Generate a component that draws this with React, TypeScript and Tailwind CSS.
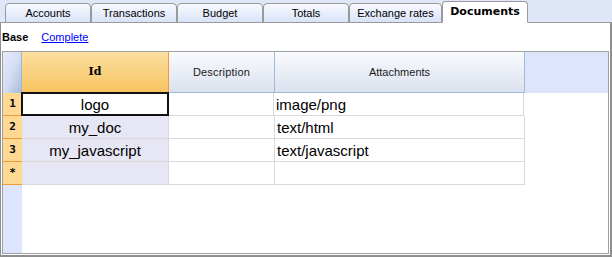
import React from "react";

const tabs = [
  { label: "Accounts", w: 86 },
  { label: "Transactions", w: 86 },
  { label: "Budget", w: 86 },
  { label: "Totals", w: 86 },
  { label: "Exchange rates", w: 93 },
];

const rows = [
  { n: "1", id: "logo", att: "image/png", sel: true },
  { n: "2", id: "my_doc", att: "text/html" },
  { n: "3", id: "my_javascript", att: "text/javascript" },
  { n: "*", id: "", att: "" },
];

export default function App() {
  return (
    <div
      className="w-[612px] h-[257px] bg-[#dfe6f8] flex flex-col overflow-hidden"
      style={{ fontFamily: "'Liberation Sans', Arial, sans-serif" }}
    >
      {/* Tab bar */}
      <div className="h-[23px] flex items-end pl-[5px] border-b border-[#9a9a9a] relative">
        {tabs.map((t) => (
          <div
            key={t.label}
            style={{ width: t.w }}
            className="h-[20px] -mb-px border border-[#9a9a9a] rounded-t-[4px] bg-gradient-to-b from-[#f8faff] to-[#d9e2f8] flex items-center justify-center text-[11px] text-black leading-none pt-[1px]"
          >
            {t.label}
          </div>
        ))}
        <div
          className="w-[86px] h-[22px] -mb-px border border-[#9a9a9a] border-b-white rounded-t-[4px] bg-white flex items-start pt-[4px] justify-center text-[11px] font-bold text-black leading-none"
          style={{ fontFamily: "'DejaVu Sans', sans-serif" }}
        >
          Documents
        </div>
      </div>

      {/* Content panel */}
      <div className="flex-1 bg-white border-l border-r-2 border-b-2 border-[#8e8e8e] flex flex-col">
        <div className="h-[28px] flex items-center pl-[1px] text-[11px] leading-none gap-[13px]">
          <span className="font-bold text-black">Base</span>
          <span className="text-[#0000ff] underline">Complete</span>
        </div>

        {/* Grid */}
        <div className="flex-1 ml-[1px] mr-[1px] mb-[1px] border border-[#a0a0a0] flex flex-col bg-white">
          {/* Header */}
          <div className="h-[41px] flex">
            <div className="w-[19px] bg-gradient-to-br from-[#e3eafb] via-[#d5def3] to-[#a8bbd8] border-r border-[#9ebad4]" />
            <div
              className="w-[147px] bg-gradient-to-b from-[#fbdf9f] to-[#f7c35f] border-r border-b border-[#f29a36] flex items-center justify-center text-[11px] font-bold text-black"
              style={{ fontFamily: "'DejaVu Serif', serif" }}
            >
              Id
            </div>
            <div className="w-[106px] bg-gradient-to-b from-[#fafbfe] to-[#dbe1ee] border-r border-b border-[#9ebad4] flex items-center justify-center text-[11px] text-[#1a1a1a] tracking-[0.2px]">
              Description
            </div>
            <div className="w-[250px] bg-gradient-to-b from-[#fafbfe] to-[#dbe1ee] border-r border-b border-[#9ebad4] flex items-center justify-center text-[11px] text-[#1a1a1a]">
              Attachments
            </div>
            <div className="flex-1 bg-[#dce5fc]" />
          </div>

          {/* Body */}
          <div className="flex-1 flex">
            <div className="w-[19px] flex flex-col bg-[#dce5fc]">
              {rows.map((r) => (
                <div
                  key={r.n}
                  className="h-[23px] bg-[#fdd993] border-b border-[#f29a36] flex items-center justify-center text-[11px] font-bold text-black"
                  style={{ fontFamily: "'DejaVu Sans Mono', monospace" }}
                >
                  {r.n}
                </div>
              ))}
            </div>
            <div className="flex flex-col">
              {rows.map((r) => (
                <div key={r.n} className="h-[23px] flex text-[15px] leading-none text-black">
                  <div
                    className={
                      r.sel
                        ? "w-[148px] -ml-px h-[24px] -mt-px bg-white border-2 border-[#111] flex items-center justify-center relative"
                        : "w-[147px] bg-[#e7e6f5] border-r border-b border-[#d9d9d9] flex items-center justify-center"
                    }
                  >
                    {r.id}
                  </div>
                  <div className={"w-[106px] border-r border-b border-[#d9d9d9] bg-white" + (r.sel ? " -ml-px" : "")} />
                  <div className="w-[250px] border-r border-b border-[#d9d9d9] bg-white flex items-center pl-[2px]">
                    {r.att}
                  </div>
                </div>
              ))}
            </div>
            <div className="flex-1" />
          </div>
        </div>
      </div>
    </div>
  );
}
